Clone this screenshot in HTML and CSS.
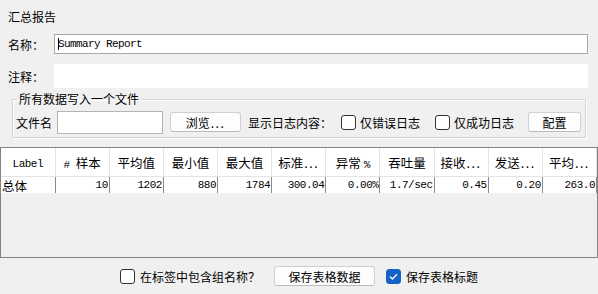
FILE: index.html
```html
<!DOCTYPE html>
<html lang="zh">

<head>
    <meta charset="UTF-8">
    <title>汇总报告</title>
    <link rel="stylesheet" href="styles.css">
</head>

<body>
    <div class="title">汇总报告</div>

    <div class="row name-row">
        <span class="row-label">名称：</span>
        <div class="text-input name-input"><span class="caret"></span>Summary Report</div>
    </div>

    <div class="row comment-row">
        <span class="row-label">注释：</span>
        <div class="comment-input"></div>
    </div>

    <fieldset class="file-box">
        <legend>所有数据写入一个文件</legend>
        <div class="file-row">
            <span>文件名</span>
            <div class="text-input file-input"></div>
            <button class="btn browse-btn">浏览<span class="dots">...</span></button>
            <span class="log-label">显示日志内容：</span>
            <span class="check check-errors"></span>
            <span class="check-text">仅错误日志</span>
            <span class="check check-success"></span>
            <span class="check-text">仅成功日志</span>
            <button class="btn config-btn">配置</button>
        </div>
    </fieldset>

    <div class="table-wrap">
        <table class="results">
            <thead>
                <tr>
                    <th class="mono label-head">Label</th>
                    <th><span class="mono">#&nbsp;</span>样本</th>
                    <th>平均值</th>
                    <th>最小值</th>
                    <th>最大值</th>
                    <th>标准<span class="dots">...</span></th>
                    <th>异常 <span class="mono">%</span></th>
                    <th>吞吐量</th>
                    <th>接收<span class="dots">...</span></th>
                    <th>发送<span class="dots">...</span></th>
                    <th>平均<span class="dots">...</span></th>
                </tr>
            </thead>
            <tbody>
                <tr>
                    <td class="label-cell">总体</td>
                    <td>10</td>
                    <td>1202</td>
                    <td>880</td>
                    <td>1784</td>
                    <td>300.04</td>
                    <td>0.00%</td>
                    <td>1.7/sec</td>
                    <td>0.45</td>
                    <td>0.20</td>
                    <td>263.0</td>
                </tr>
            </tbody>
        </table>
    </div>

    <div class="bottom-bar">
        <span class="check"></span>
        <span class="check-text">在标签中包含组名称？</span>
        <button class="btn save-btn">保存表格数据</button>
        <span class="check checked">
            <svg viewBox="0 0 15 15" width="15" height="15">
                <path d="M4 7.6 6.4 10 11 5.2" fill="none" stroke="white" stroke-width="1.3" />
            </svg>
        </span>
        <span class="check-text">保存表格标题</span>
    </div>
</body>

</html>
```

FILE: styles.css
```css
body {
    margin: 0;
    background: #f0f0f0;
    font-family: "Noto Sans CJK SC", "Microsoft YaHei", sans-serif;
    font-size: 12px;
    color: #000;
    width: 598px;
    height: 294px;
    overflow: hidden;
}

.mono {
    font-family: "Liberation Mono", "DejaVu Sans Mono", monospace;
    font-size: 11px;
    letter-spacing: -0.5px;
}

.dots {
    letter-spacing: 1.5px;
    margin-left: 1px;
}

.title {
    padding: 9px 0 0 8px;
    line-height: 16px;
}

.row {
    display: flex;
    align-items: center;
    padding-left: 8px;
}

.row-label {
    width: 46px;
}

.name-row {
    margin-top: 9px;
    height: 20px;
}

.comment-row {
    margin-top: 10px;
    height: 24px;
}

.text-input {
    box-sizing: border-box;
    background: #fff;
    border: 1px solid #a8a8a8;
}

.name-input {
    width: 534px;
    height: 20px;
    display: flex;
    align-items: center;
    padding-left: 3px;
    font-family: "Liberation Mono", "DejaVu Sans Mono", monospace;
    font-size: 11px;
    letter-spacing: -0.6px;
}

.caret {
    width: 1px;
    height: 12px;
    background: #000;
    margin-right: -1px;
}

.comment-input {
    width: 534px;
    height: 24px;
    background: #fff;
}

/* file box */
.file-box {
    margin: 4px 12px 0 12px;
    padding: 0 3px 3px 3px;
    border: 1px solid #d6d6d6;
    box-shadow: 1px 1px 0 #fff, inset 1px 1px 0 #fff;
}

.file-box legend {
    padding: 0 2px;
    margin-left: 1px;
    line-height: 14px;
}

.file-row {
    display: flex;
    align-items: center;
    height: 24px;
    margin-top: 4px;
}

.file-input {
    width: 106px;
    height: 23px;
    margin-left: 5px;
    border-color: #b4b4b4;
}

.btn {
    box-sizing: border-box;
    height: 20px;
    padding: 0;
    background: #fdfdfd;
    border: 1px solid #d0d0d0;
    border-bottom-color: #bcbcbc;
    border-radius: 3px;
    font-family: inherit;
    font-size: 12px;
    color: #000;
}

.browse-btn {
    width: 71px;
    margin-left: 7px;
}

.log-label {
    margin-left: 7px;
}

.check {
    box-sizing: border-box;
    width: 15px;
    height: 15px;
    border: 1px solid #333;
    border-radius: 3px;
    background: #fff;
    flex: none;
}

.check-errors {
    margin-left: 9px;
}

.check-success {
    margin-left: 15px;
}

.check-text {
    margin-left: 4px;
}

.config-btn {
    width: 53px;
    margin-left: 14px;
}

/* results table */
.table-wrap {
    box-sizing: border-box;
    margin-top: 9px;
    width: 598px;
    height: 111px;
    border: 1px solid #828282;
    background: #f0f0f0;
}

.results {
    width: 100%;
    table-layout: fixed;
    border-collapse: collapse;
}

.results th {
    height: 28px;
    padding: 0;
    background: #fff;
    border-right: 1px solid #e4e4e4;
    border-bottom: 1px solid #e4e4e4;
    font-weight: normal;
    font-size: 12.5px;
    white-space: nowrap;
    overflow: hidden;
}

.results th.label-head {
    font-size: 11px;
    padding-top: 3px;
    box-sizing: border-box;
}

.results td {
    height: 16px;
    padding: 0 1px 0 0;
    background: #fff;
    border-right: 1px solid #8a8a8a;
    text-align: right;
    font-family: "Liberation Mono", "DejaVu Sans Mono", monospace;
    font-size: 11px;
    letter-spacing: -0.5px;
    line-height: 15px;
}

.results td.label-cell {
    text-align: left;
    padding-left: 1px;
    font-family: "Noto Sans CJK SC", sans-serif;
    font-size: 12.5px;
    letter-spacing: 0;
}

/* bottom bar */
.bottom-bar {
    height: 36px;
    display: flex;
    align-items: center;
    padding-left: 120px;
}

.bottom-bar .check-text {
    margin-left: 5px;
}

.save-btn {
    width: 101px;
    margin-left: 14px;
}

.check.checked {
    margin-left: 11px;
    background: #1561c4;
    border-color: #1561c4;
    display: flex;
    align-items: center;
    justify-content: center;
}

.check.checked svg {
    flex: none;
}
```
